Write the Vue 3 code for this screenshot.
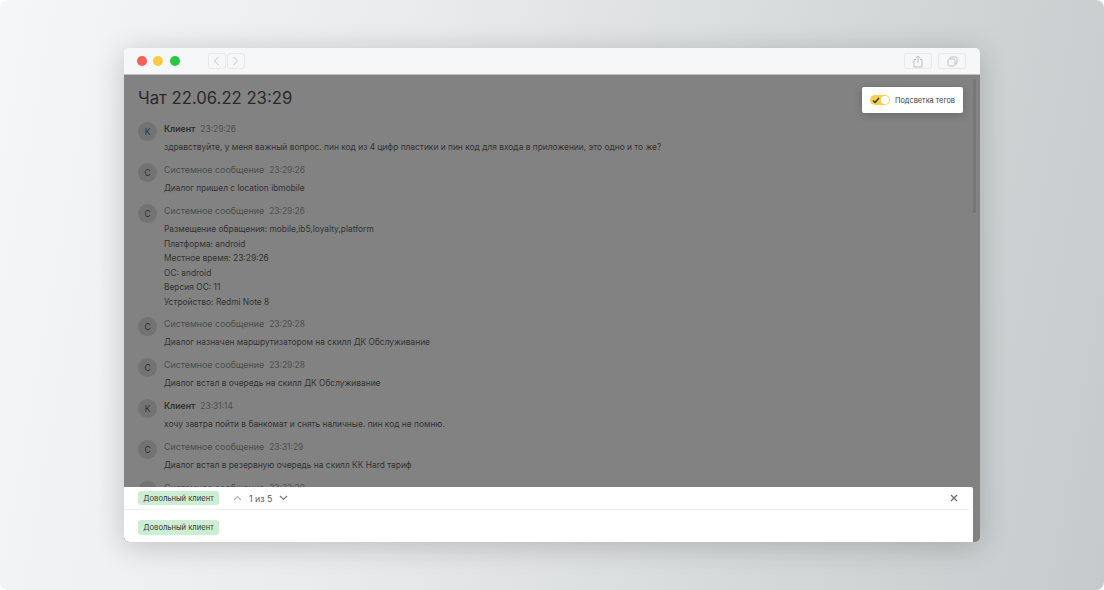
<script setup>
const messages = [
  { a: 'К', name: 'Клиент', client: true, time: '23:29:26', lines: ['здравствуйте, у меня важный вопрос. пин код из 4 цифр пластики и пин код для входа в приложении, это одно и то же?'] },
  { a: 'С', name: 'Системное сообщение', time: '23:29:26', lines: ['Диалог пришел с location ibmobile'] },
  { a: 'С', name: 'Системное сообщение', time: '23:29:26', lines: ['Размещение обращения: mobile,ib5,loyalty,platform', 'Платформа: android', 'Местное время: 23:29:26', 'ОС: android', 'Версия ОС: 11', 'Устройство: Redmi Note 8'] },
  { a: 'С', name: 'Системное сообщение', time: '23:29:28', lines: ['Диалог назначен маршрутизатором на скилл ДК Обслуживание'] },
  { a: 'С', name: 'Системное сообщение', time: '23:29:28', lines: ['Диалог встал в очередь на скилл ДК Обслуживание'] },
  { a: 'К', name: 'Клиент', client: true, time: '23:31:14', lines: ['хочу завтра пойти в банкомат и снять наличные. пин код не помню.'] },
  { a: 'С', name: 'Системное сообщение', time: '23:31:29', lines: ['Диалог встал в резервную очередь на скилл КК Hard тариф'] },
  { a: 'С', name: 'Системное сообщение', time: '23:32:29', lines: ['Диалог назначен'] },
]
</script>

<template>
  <div class="page">
    <div class="window">
      <header class="bar">
        <div class="lights">
          <span class="dot red"></span><span class="dot yellow"></span><span class="dot green"></span>
        </div>
        <div class="nav">
          <button class="nb"><svg width="7" height="10" viewBox="0 0 7 10"><path d="M5.500 1 1.500 5l4 4" fill="none" stroke="#c0c2c4" stroke-width="1"/></svg></button>
          <button class="nb"><svg width="7" height="10" viewBox="0 0 7 10"><path d="M1.500 1l4 4-4 4" fill="none" stroke="#c0c2c4" stroke-width="1"/></svg></button>
        </div>
        <div class="tools">
          <button class="tb"><svg width="10" height="13" viewBox="0 0 10 13" fill="none" stroke="#bfc1c3" stroke-width="1"><path d="M3 4.500H1v7.500h8V4.500H7"/><path d="M5 8V1M3 3l2-2 2 2"/></svg></button>
          <button class="tb"><svg width="11" height="11" viewBox="0 0 11 11" fill="none" stroke="#bfc1c3" stroke-width="1"><rect x="1" y="3" width="7" height="7" rx="1.500"/><path d="M3 3V2.500A1.500 1.500 0 0 1 4.500 1h4A1.500 1.500 0 0 1 10 2.500v4A1.500 1.500 0 0 1 8.500 8H8"/></svg></button>
        </div>
      </header>
      <div class="body">
        <main class="chat">
          <h1 class="title">Чат 22.06.22 23:29</h1>
          <div v-for="(m, i) in messages" :key="i" class="msg">
            <div class="avatar">{{ m.a }}</div>
            <div class="content">
              <div class="meta"><span :class="m.client ? 'client' : 'sys'">{{ m.name }}</span><span class="time">{{ m.time }}</span></div>
              <div class="lines"><div v-for="(l, j) in m.lines" :key="j" class="line">{{ l }}</div></div>
            </div>
          </div>
        </main>
        <div class="scroll"><div class="thumb"></div></div>
        <div class="toggle-card">
          <span class="switch">
            <svg class="check" width="8" height="7" viewBox="0 0 8 7"><path d="M1 3.500 3 5.500 7 1" fill="none" stroke="#2b2b2b" stroke-width="1.300"/></svg>
            <span class="knob"></span>
          </span>
          <span class="toggle-label">Подсветка тегов</span>
        </div>
        <section class="panel">
          <div class="panel-top">
            <span class="tag">Довольный клиент</span>
            <div class="pager">
              <svg width="9" height="6" viewBox="0 0 9 6"><path d="M1 5l3.500-3.500L8 5" fill="none" stroke="#b4b6b8" stroke-width="1.200"/></svg>
              <span class="count">1 из 5</span>
              <svg width="9" height="6" viewBox="0 0 9 6"><path d="M1 1l3.500 3.500L8 1" fill="none" stroke="#7a7c7f" stroke-width="1.200"/></svg>
            </div>
            <svg class="close" width="8" height="8" viewBox="0 0 8 8"><path d="M1 1l6 6M7 1 1 7" fill="none" stroke="#6a6d70" stroke-width="1.300"/></svg>
          </div>
          <div class="panel-bottom"><span class="tag">Довольный клиент</span></div>
        </section>
      </div>
    </div>
  </div>
</template>

<style>
html, body { margin: 0; background: #fff; }
</style>

<style scoped>
.page {
  width: 1104px; height: 590px; box-sizing: border-box; padding: 48px 124px;
  background: linear-gradient(100deg, #f5f6f7 0%, #e9ebec 35%, #d6d9da 70%, #c6cacc 100%);
  border-radius: 8px; font-family: Inter, "Noto Sans", sans-serif; overflow: hidden;
}
.window {
  height: 494px; display: flex; flex-direction: column; border-radius: 5px; overflow: hidden;
  box-shadow: 0 4px 30px rgba(0,0,0,.2);
}
.bar {
  height: 27px; flex: none; background: #f6f7f8; display: flex; align-items: center; padding: 0 14px 0 13px; box-sizing: border-box;
  border-bottom: 1px solid #bfbfbf;
}
.lights { display: flex; gap: 6.400px; }
.dot { width: 10px; height: 10px; border-radius: 50%; }
.red { background: #fc5f57; } .yellow { background: #fdcb3f; } .green { background: #2ac840; }
.nav { display: flex; gap: 1px; margin-left: 28px; }
.nb {
  width: 18px; height: 16px; padding: 0; border: 1px solid #e8e9ea; border-radius: 3px; background: transparent;
  display: flex; align-items: center; justify-content: center;
}
.tools { display: flex; gap: 6px; margin-left: auto; }
.tb {
  width: 28px; height: 16px; padding: 0; border: 1px solid #e8e9ea; border-radius: 3px; background: transparent;
  display: flex; align-items: center; justify-content: center;
}
.body { position: relative; flex: 1; background: #828282; display: flex; min-height: 0; overflow: hidden; }
.chat { flex: 1; padding: 0 14px; overflow: hidden; color: #2e2e2e; }
.title { margin: 12px 0 11px; font-size: 16.700px; line-height: 22px; font-weight: 400; color: #2a2a2a; }
.msg { display: flex; gap: 7px; height: 41px; align-items: flex-start; }
.msg:has(.line:nth-child(2)) { height: 113px; }
.avatar {
  width: 19px; height: 19px; border-radius: 50%; background: #737373; color: #2f2f2f; font-size: 8.500px; flex: none;
  display: flex; align-items: center; justify-content: center; margin-top: 2px;
}
.meta { font-size: 8.900px; line-height: 12px; display: flex; gap: 5px; margin-top: 3px; }
.client { font-weight: 600; font-size: 8.700px; color: #2f2f2f; }
.sys { color: #4c4c4c; }
.time { color: #505050; font-size: 8.400px; }
.lines { margin-top: 5px; }
.line { font-size: 8.400px; line-height: 14.600px; color: #323232; white-space: nowrap; }
.scroll { width: 7px; flex: none; position: relative; }
.thumb { position: absolute; left: 0; top: 4px; width: 3px; height: 134px; background: #777; border-radius: 2px; }
.toggle-card {
  position: absolute; top: 12px; right: 17px; width: 101px; height: 26px; background: #fff; border-radius: 2px;
  display: flex; align-items: center; gap: 5px; padding-left: 8px; box-sizing: border-box; box-shadow: 0 2px 8px rgba(0,0,0,.2);
}
.switch { position: relative; width: 20px; height: 10px; background: #f8d04e; border-radius: 5px; flex: none; }
.check { position: absolute; left: 2px; top: 1.500px; }
.knob { position: absolute; right: 1px; top: 1px; width: 8px; height: 8px; background: #fff; border-radius: 50%; }
.toggle-label { font-size: 7.350px; color: #3a3a3a; white-space: nowrap; }
.panel { position: absolute; left: 0; right: 7px; bottom: 0; height: 55px; background: #fff; border-radius: 0 2px 0 5px; }
.panel-top {
  height: 22px; margin-right: 4px; padding-left: 14px; padding-right: 11px; display: flex; align-items: center;
  border-bottom: 1px solid #efefef;
}
.panel-bottom { padding: 10px 14px 0; display: flex; }
.tag {
  width: 81px; height: 14.500px; background: #cdeed2; border-radius: 3px; font-size: 7.600px; color: #3a3a3a; display: flex;
  align-items: center; justify-content: center; white-space: nowrap;
}
.pager { display: flex; align-items: center; margin-left: 14px; gap: 5px; }
.count { font-size: 8.800px; color: #5a5d60; margin: 0 2px; }
.close { margin-left: auto; }
</style>
